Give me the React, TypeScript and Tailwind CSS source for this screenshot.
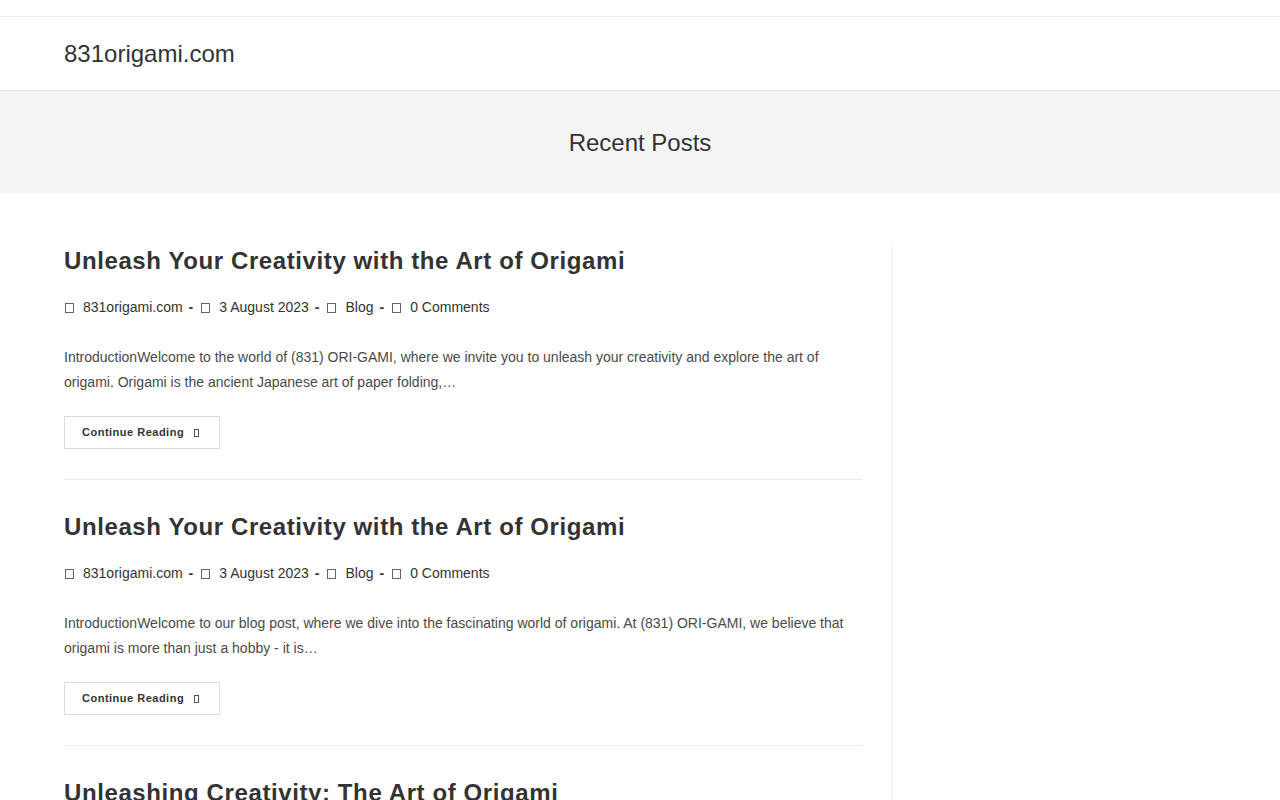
import React from "react";

const POSTS = [
  {
    title: "Unleash Your Creativity with the Art of Origami",
    excerpt:
      "IntroductionWelcome to the world of (831) ORI-GAMI, where we invite you to unleash your creativity and explore the art of origami. Origami is the ancient Japanese art of paper folding,…",
  },
  {
    title: "Unleash Your Creativity with the Art of Origami",
    excerpt:
      "IntroductionWelcome to our blog post, where we dive into the fascinating world of origami. At (831) ORI-GAMI, we believe that origami is more than just a hobby - it is…",
  },
  {
    title: "Unleashing Creativity: The Art of Origami",
    excerpt:
      "IntroductionWelcome to (831) ORI-GAMI, your destination for all things origami. Origami is the art of paper folding that has captivated people for centuries…",
  },
];

// missing-glyph box, the icon font never loaded on the original
function Tofu() {
  return <span className="inline-block h-[10px] w-[9px] border border-[#666]" />;
}

function Meta() {
  const items = ["831origami.com", "3 August 2023", "Blog", "0 Comments"];
  return (
    <ul className="flex items-center text-[14px] leading-[25px] text-[#333]">
      {items.map((label, i) => (
        <li key={label} className="flex items-center">
          {i > 0 && <span className="ml-[6px] mr-[7px] font-bold">-</span>}
          <span className="ml-[1px] mr-[9px] flex items-center">
            <Tofu />
          </span>
          <span>{label}</span>
        </li>
      ))}
    </ul>
  );
}

function Post({ title, excerpt }: { title: string; excerpt: string }) {
  return (
    <article className="mb-[30px] border-b border-[#ececec] pb-[30px]">
      <h2 className="text-[24px] font-bold leading-[34px] tracking-[0.6px] text-[#333]">{title}</h2>
      <div className="mt-[17px]">
        <Meta />
      </div>
      <p className="mt-[25px] text-[14px] leading-[25px] text-[#4a4a4a]">{excerpt}</p>
      <div className="mt-[21px]">
        <a className="inline-flex h-[33px] items-center border border-[#ddd] pl-[17px] pr-[20px] text-[11px] font-bold tracking-[0.5px] text-[#333]">
          Continue Reading
          <span className="ml-[10px] inline-block h-[8px] w-[5px] border border-[#555]" />
        </a>
      </div>
    </article>
  );
}

export default function App() {
  return (
    <div className="min-h-screen bg-white font-['Liberation_Sans',Arial,sans-serif]">
      <div className="h-[17px] border-b border-[#eee]" />
      <header className="flex h-[74px] items-center border-b border-[#eaeaea] px-16">
        <span className="text-[24px] text-[#333]">831origami.com</span>
      </header>
      <div className="flex h-[102px] items-center justify-center bg-[#f4f4f4] pt-[2px]">
        <h1 className="text-[24px] text-[#333]">Recent Posts</h1>
      </div>
      <main className="mx-16 flex pt-[51px]">
        <div className="w-[72%] border-r border-[#f1f1f1] pr-[30px]">
          {POSTS.map((p, i) => (
            <Post key={i} {...p} />
          ))}
        </div>
        <aside className="w-[28%]" />
      </main>
    </div>
  );
}
